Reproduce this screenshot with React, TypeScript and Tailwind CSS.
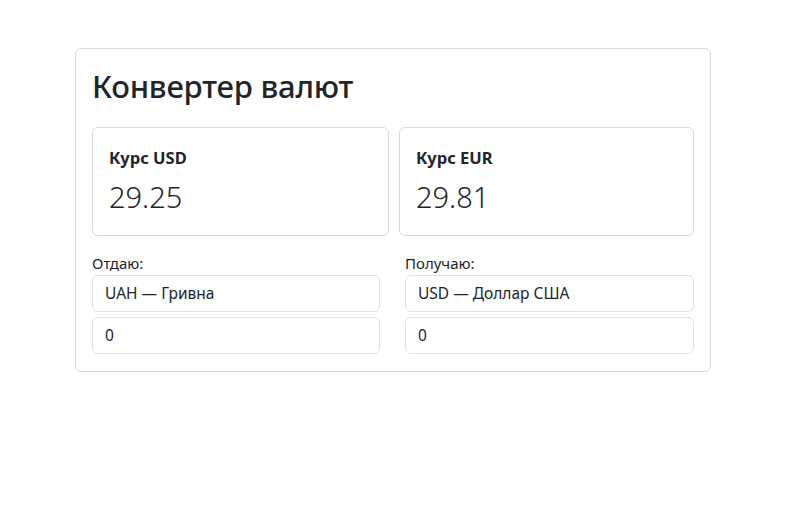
import React from "react";

export default function App() {
  return (
    <div className="min-h-[521px] bg-white text-[#212529]" style={{ fontFamily: '"Noto Sans", "Open Sans", sans-serif' }}>
      <div className="pt-[48px] pl-[75px]">
        <div className="w-[636px] h-[324px] border border-[#d9d9d9] rounded-[6px] px-[16px] pt-[17px]">
          <h1 className="text-[31px] leading-[40px] font-medium m-0 tracking-[-0.2px]">Конвертер валют</h1>
          <div className="flex gap-[10px] mt-[21px]">
            <div className="w-[297px] h-[109px] border border-[#d9d9d9] rounded-[6px] px-[16px] pt-[18px]">
              <div className="text-[16.5px] leading-[24px] font-bold">Курс USD</div>
              <div className="text-[29px] leading-[40px] font-light mt-[7px]">29.25</div>
            </div>
            <div className="w-[295px] h-[109px] border border-[#d9d9d9] rounded-[6px] px-[16px] pt-[18px]">
              <div className="text-[16.5px] leading-[24px] font-bold">Курс EUR</div>
              <div className="text-[29px] leading-[40px] font-light mt-[7px]">29.81</div>
            </div>
          </div>
          <div className="flex gap-[25px] mt-[15px]">
            <div className="w-[288px]">
              <div className="text-[15px] leading-[24px]">Отдаю:</div>
              <div className="h-[37px] border border-[#dee2e6] rounded-[6px] px-[12px] flex items-center text-[15.5px]">UAH — Гривна</div>
              <div className="h-[37px] border border-[#dee2e6] rounded-[6px] px-[12px] flex items-center text-[15.5px] mt-[5px]">0</div>
            </div>
            <div className="w-[289px]">
              <div className="text-[15px] leading-[24px]">Получаю:</div>
              <div className="h-[37px] border border-[#dee2e6] rounded-[6px] px-[12px] flex items-center text-[15.5px]">USD — Доллар США</div>
              <div className="h-[37px] border border-[#dee2e6] rounded-[6px] px-[12px] flex items-center text-[15.5px] mt-[5px]">0</div>
            </div>
          </div>
        </div>
      </div>
    </div>
  );
}
